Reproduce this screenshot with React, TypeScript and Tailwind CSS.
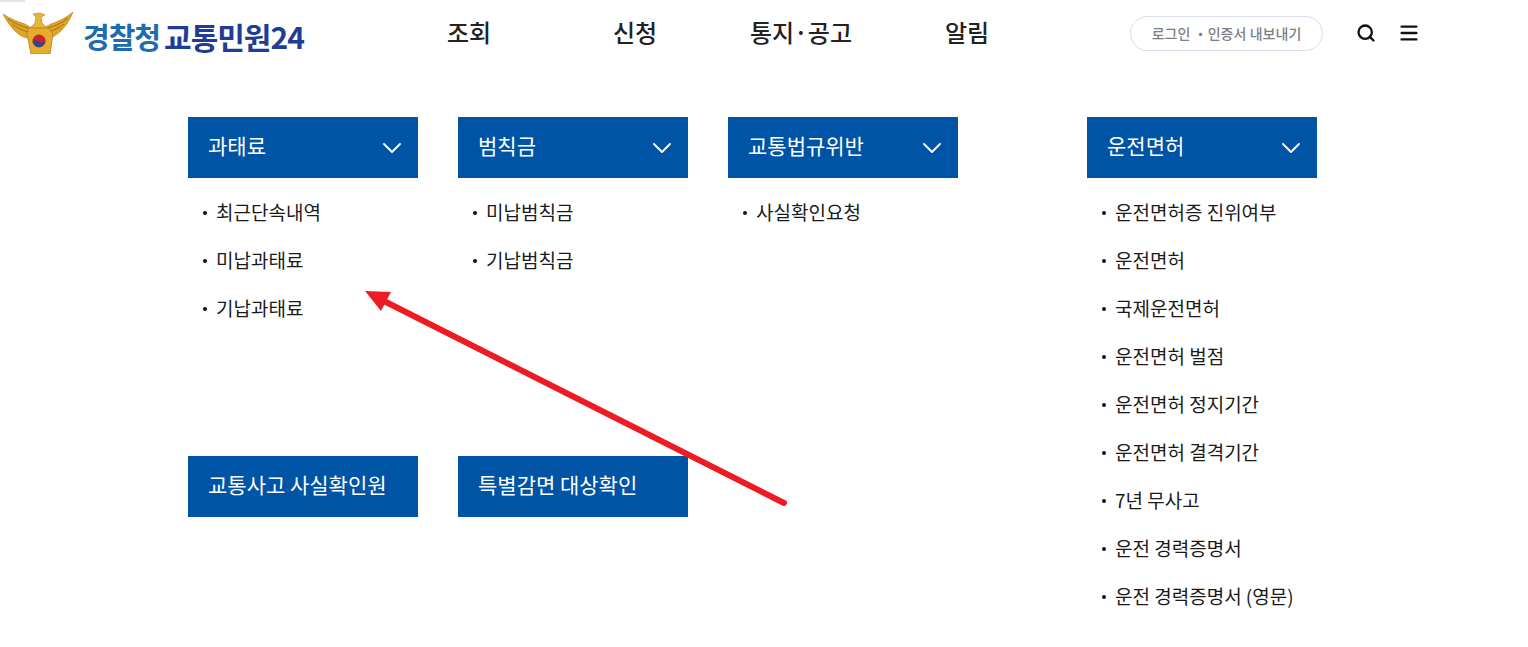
import { ChevronDown, Menu, Search } from "lucide-react"

const sans = "font-['Noto_Sans_CJK_KR','Noto_Sans',sans-serif]"

const nav = ["조회", "신청", "통지·공고", "알림"]

function Emblem() {
  return (
    <svg width="70" height="42" viewBox="0 0 70 42" className="shrink-0">
      <path d="M0 2 C8 7 15 10 22 12 L27 15 L27 24 L23 26 C14 23 6 14 0 2Z" fill="#e0a526" stroke="#b07d1a" strokeWidth="0.6" />
      <path d="M70 0 C63 6 56 9 48 12 L42 15 L42 24 L47 26 C56 23 65 13 70 0Z" fill="#e0a526" stroke="#b07d1a" strokeWidth="0.6" />
      <path d="M5 7 C11 11 18 14 25 16 M9 12 C14 16 19 18 25 20 M65 6 C59 11 52 14 45 16 M61 12 C56 16 51 18 45 20" stroke="#9a6d14" strokeWidth="0.9" fill="none" />
      <path d="M30 2 L37 1 L42 3 L38 5 L39 11 L45 17 L26 17 L32 11 L33 5Z" fill="#e8b534" stroke="#b07d1a" strokeWidth="0.6" />
      <path d="M25 16 L46 16 L50 22 L47 42 L28 42 L24 22Z" fill="#e6ad2c" stroke="#b07d1a" strokeWidth="0.8" />
      <circle cx="36" cy="29" r="6.5" fill="#c8232c" />
      <path d="M29.6 30 A6.5 6.5 0 0 0 42.4 28 C41 32 37 31.5 35 29.5 C33 28 30.5 28 29.6 30Z" fill="#1e4b9c" />
    </svg>
  )
}

function Logo() {
  return (
    <div className="flex w-[386px] items-center pl-[3px]">
      <Emblem />
      <div className={`ml-[10px] flex translate-y-[3px] items-center gap-[4px] font-bold leading-none ${sans}`}>
        <span className="text-[29px] tracking-[-1px] text-[#1e6cb0]">경찰청</span>
        <span className="text-[30px] tracking-[-1px] text-[#1f3d94]">교통민원24</span>
      </div>
    </div>
  )
}

function Header() {
  return (
    <header className="flex h-[66px] items-center">
      <Logo />
      <nav className="grid w-[664px] grid-cols-4">
        {nav.map((n) => (
          <a key={n} className={`pb-[2px] text-center text-[24px] font-medium leading-none text-[#222222] ${sans}`}>
            {n}
          </a>
        ))}
      </nav>
      <div className="ml-[80px] flex items-center">
        <div className={`flex h-[35px] w-[193px] items-center justify-center rounded-full border border-[#d9dde9] text-[14px] font-medium tracking-[0.05px] text-[#7b7f87] ${sans}`}>
          로그인 ・인증서 내보내기
        </div>
        <Search className="ml-[33px] h-[20px] w-[20px] text-[#111111]" strokeWidth={2.8} />
        <Menu className="ml-[22px] h-[22px] w-[22px] text-[#111111]" strokeWidth={2.6} />
      </div>
    </header>
  )
}

function Section({ title, items, chevron = true }: { title: string; items?: string[]; chevron?: boolean }) {
  return (
    <div className="w-[230px]">
      <div className="flex h-[61px] items-center justify-between bg-[#0054a6] pl-[20px] pr-[10px]">
        <span className={`pb-[3px] text-[21px] font-normal text-white ${sans}`}>{title}</span>
        {chevron && <ChevronDown className="h-[32px] w-[32px] text-white" strokeWidth={1.4} />}
      </div>
      {items && (
        <ul className="mt-[11px]">
          {items.map((t) => (
            <li key={t} className={`flex h-[48px] items-center pl-[15px] text-[19px] leading-none text-[#1a1a1a] ${sans}`}>
              <span className="mr-[9px] h-[4px] w-[4px] rounded-full bg-[#111111]" />
              <span className="pb-[3px]">{t}</span>
            </li>
          ))}
        </ul>
      )}
    </div>
  )
}

function Arrow() {
  return (
    <svg className="pointer-events-none absolute left-0 top-0" width="1528" height="647">
      <line x1="784" y1="503" x2="378" y2="298" stroke="#ed1c24" strokeWidth="6" strokeLinecap="round" />
      <polygon points="365,291 391,292 381,311" fill="#ed1c24" />
    </svg>
  )
}

export default function App() {
  return (
    <div className="relative h-[647px] w-[1528px] overflow-hidden bg-white">
      <div className="absolute left-0 top-0 h-[2px] w-[25px] bg-[#e4e4e4]" />
      <Header />
      <main className="mt-[51px] flex pl-[188px]">
        <div className="w-[770px]">
          <div className="flex h-[339px] gap-[40px]">
            <Section title="과태료" items={["최근단속내역", "미납과태료", "기납과태료"]} />
            <Section title="범칙금" items={["미납범칙금", "기납범칙금"]} />
            <Section title="교통법규위반" items={["사실확인요청"]} />
          </div>
          <div className="flex gap-[40px]">
            <Section title="교통사고 사실확인원" chevron={false} />
            <Section title="특별감면 대상확인" chevron={false} />
          </div>
        </div>
        <div className="ml-[129px]">
          <Section
            title="운전면허"
            items={[
              "운전면허증 진위여부",
              "운전면허",
              "국제운전면허",
              "운전면허 벌점",
              "운전면허 정지기간",
              "운전면허 결격기간",
              "7년 무사고",
              "운전 경력증명서",
              "운전 경력증명서 (영문)",
            ]}
          />
        </div>
      </main>
      <Arrow />
    </div>
  )
}
